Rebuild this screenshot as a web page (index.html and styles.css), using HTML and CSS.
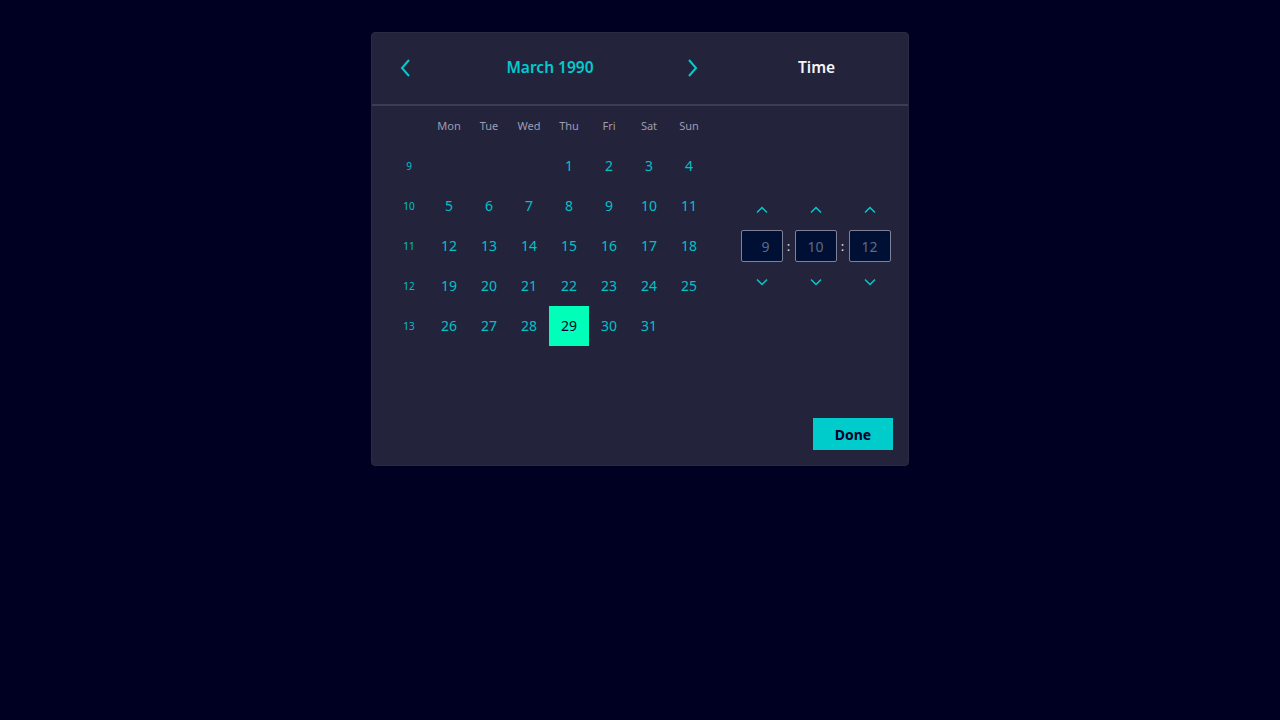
FILE: index.html
```html
<!DOCTYPE html>
<html>
<head>
<meta charset="utf-8">
<link rel="stylesheet" href="styles.css">
</head>
<body>
<div class="card">
  <div class="header">
    <div class="cal-head">
      <button class="nav"><svg width="16" height="20" viewBox="0 0 16 20"><path d="M11 2 L4 10 L11 18" fill="none" stroke="#00cccc" stroke-width="2"/></svg></button>
      <div class="month">March 1990</div>
      <button class="nav"><svg width="16" height="20" viewBox="0 0 16 20"><path d="M5 2 L12 10 L5 18" fill="none" stroke="#00cccc" stroke-width="2"/></svg></button>
    </div>
    <div class="time-head">Time</div>
  </div>
  <div class="body">
    <div class="calendar">
      <div class="cell"></div><div class="cell wd">Mon</div><div class="cell wd">Tue</div><div class="cell wd">Wed</div><div class="cell wd">Thu</div><div class="cell wd">Fri</div><div class="cell wd">Sat</div><div class="cell wd">Sun</div>
      <div class="cell wk">9</div><div class="cell"></div><div class="cell"></div><div class="cell"></div><div class="cell d">1</div><div class="cell d">2</div><div class="cell d">3</div><div class="cell d">4</div>
      <div class="cell wk">10</div><div class="cell d">5</div><div class="cell d">6</div><div class="cell d">7</div><div class="cell d">8</div><div class="cell d">9</div><div class="cell d">10</div><div class="cell d">11</div>
      <div class="cell wk">11</div><div class="cell d">12</div><div class="cell d">13</div><div class="cell d">14</div><div class="cell d">15</div><div class="cell d">16</div><div class="cell d">17</div><div class="cell d">18</div>
      <div class="cell wk">12</div><div class="cell d">19</div><div class="cell d">20</div><div class="cell d">21</div><div class="cell d">22</div><div class="cell d">23</div><div class="cell d">24</div><div class="cell d">25</div>
      <div class="cell wk">13</div><div class="cell d">26</div><div class="cell d">27</div><div class="cell d">28</div><div class="cell d sel">29</div><div class="cell d">30</div><div class="cell d">31</div><div class="cell"></div>
    </div>
    <div class="time">
      <div class="spin">
        <button class="chev"><svg width="12" height="8" viewBox="0 0 12 8"><path d="M1 6.5 L6 1.5 L11 6.5" fill="none" stroke="#00cccc" stroke-width="1.5"/></svg></button>
        <div class="field">9</div>
        <button class="chev"><svg width="12" height="8" viewBox="0 0 12 8"><path d="M1 1.5 L6 6.5 L11 1.5" fill="none" stroke="#00cccc" stroke-width="1.5"/></svg></button>
      </div>
      <div class="colon">:</div>
      <div class="spin">
        <button class="chev"><svg width="12" height="8" viewBox="0 0 12 8"><path d="M1 6.5 L6 1.5 L11 6.5" fill="none" stroke="#00cccc" stroke-width="1.5"/></svg></button>
        <div class="field">10</div>
        <button class="chev"><svg width="12" height="8" viewBox="0 0 12 8"><path d="M1 1.5 L6 6.5 L11 1.5" fill="none" stroke="#00cccc" stroke-width="1.5"/></svg></button>
      </div>
      <div class="colon">:</div>
      <div class="spin">
        <button class="chev"><svg width="12" height="8" viewBox="0 0 12 8"><path d="M1 6.5 L6 1.5 L11 6.5" fill="none" stroke="#00cccc" stroke-width="1.5"/></svg></button>
        <div class="field">12</div>
        <button class="chev"><svg width="12" height="8" viewBox="0 0 12 8"><path d="M1 1.5 L6 6.5 L11 1.5" fill="none" stroke="#00cccc" stroke-width="1.5"/></svg></button>
      </div>
    </div>
  </div>
  <div class="footer">
    <button class="done">Done</button>
  </div>
</div>
</body>
</html>
```
FILE: styles.css
```css
* { box-sizing: border-box; }
html, body {
  margin: 0;
  height: 100%;
  background: #000023;
  font-family: "Noto Sans", "Open Sans", sans-serif;
}
body {
  display: flex;
  justify-content: center;
  align-items: flex-start;
  padding-top: 32px;
}
button {
  font-family: inherit;
  background: none;
  border: none;
  padding: 0;
  cursor: pointer;
}
.card {
  width: 538px;
  height: 434px;
  background: #23233c;
  border: 1px solid #2a2a44;
  border-radius: 4px;
  display: flex;
  flex-direction: column;
}
.header {
  display: flex;
  height: 73px;
  border-bottom: 2px solid #3c3c54;
}
.cal-head {
  width: 351px;
  display: flex;
  align-items: center;
  justify-content: space-between;
  padding: 0 15px 2px 18px;
}
.nav {
  width: 32px;
  height: 32px;
  display: flex;
  align-items: center;
  justify-content: center;
}
.month {
  color: #00cccc;
  font-weight: 600;
  font-size: 15.5px;
  margin-left: 2px;
  padding-bottom: 2px;
}
.time-head {
  flex: 1;
  display: flex;
  align-items: center;
  justify-content: center;
  color: #f5f5f8;
  font-weight: 600;
  font-size: 15.5px;
  padding: 0 0 3px 2px;
}
.body {
  display: flex;
  height: 296px;
}
.calendar {
  width: 351px;
  padding-left: 17px;
  display: grid;
  grid-template-columns: repeat(8, 40px);
  grid-auto-rows: 40px;
  align-content: start;
}
.cell {
  display: flex;
  align-items: center;
  justify-content: center;
  font-size: 14px;
  color: #00c1c8;
  padding-bottom: 2px;
}
.wd {
  font-size: 11px;
  color: #9d9db0;
}
.wk {
  font-size: 10px;
  color: #00c1c8;
  padding-bottom: 0;
}
.sel {
  background: #00ffb9;
  color: #000028;
}
.time {
  flex: 1;
  display: flex;
  justify-content: center;
  align-items: flex-start;
  padding-top: 92px;
}
.spin {
  display: flex;
  flex-direction: column;
  align-items: center;
  gap: 8px;
}
.chev {
  width: 32px;
  height: 24px;
  display: flex;
  align-items: center;
  justify-content: center;
}
.field {
  width: 42px;
  height: 32px;
  background: #001034;
  border: 1px solid #7d8299;
  border-radius: 2px;
  color: #5d6a85;
  font-size: 14px;
  display: flex;
  align-items: center;
  justify-content: flex-end;
  padding-right: 12px;
}
.colon {
  width: 12px;
  height: 32px;
  margin-top: 32px;
  display: flex;
  align-items: center;
  justify-content: center;
  color: #e0e0e8;
  font-size: 13px;
}
.footer {
  flex: 1;
  display: flex;
  justify-content: flex-end;
  align-items: flex-end;
  padding: 0 15px 15px 0;
}
.done {
  width: 80px;
  height: 32px;
  background: #00cccc;
  color: #000028;
  font-weight: 700;
  font-size: 14px;
}
```
